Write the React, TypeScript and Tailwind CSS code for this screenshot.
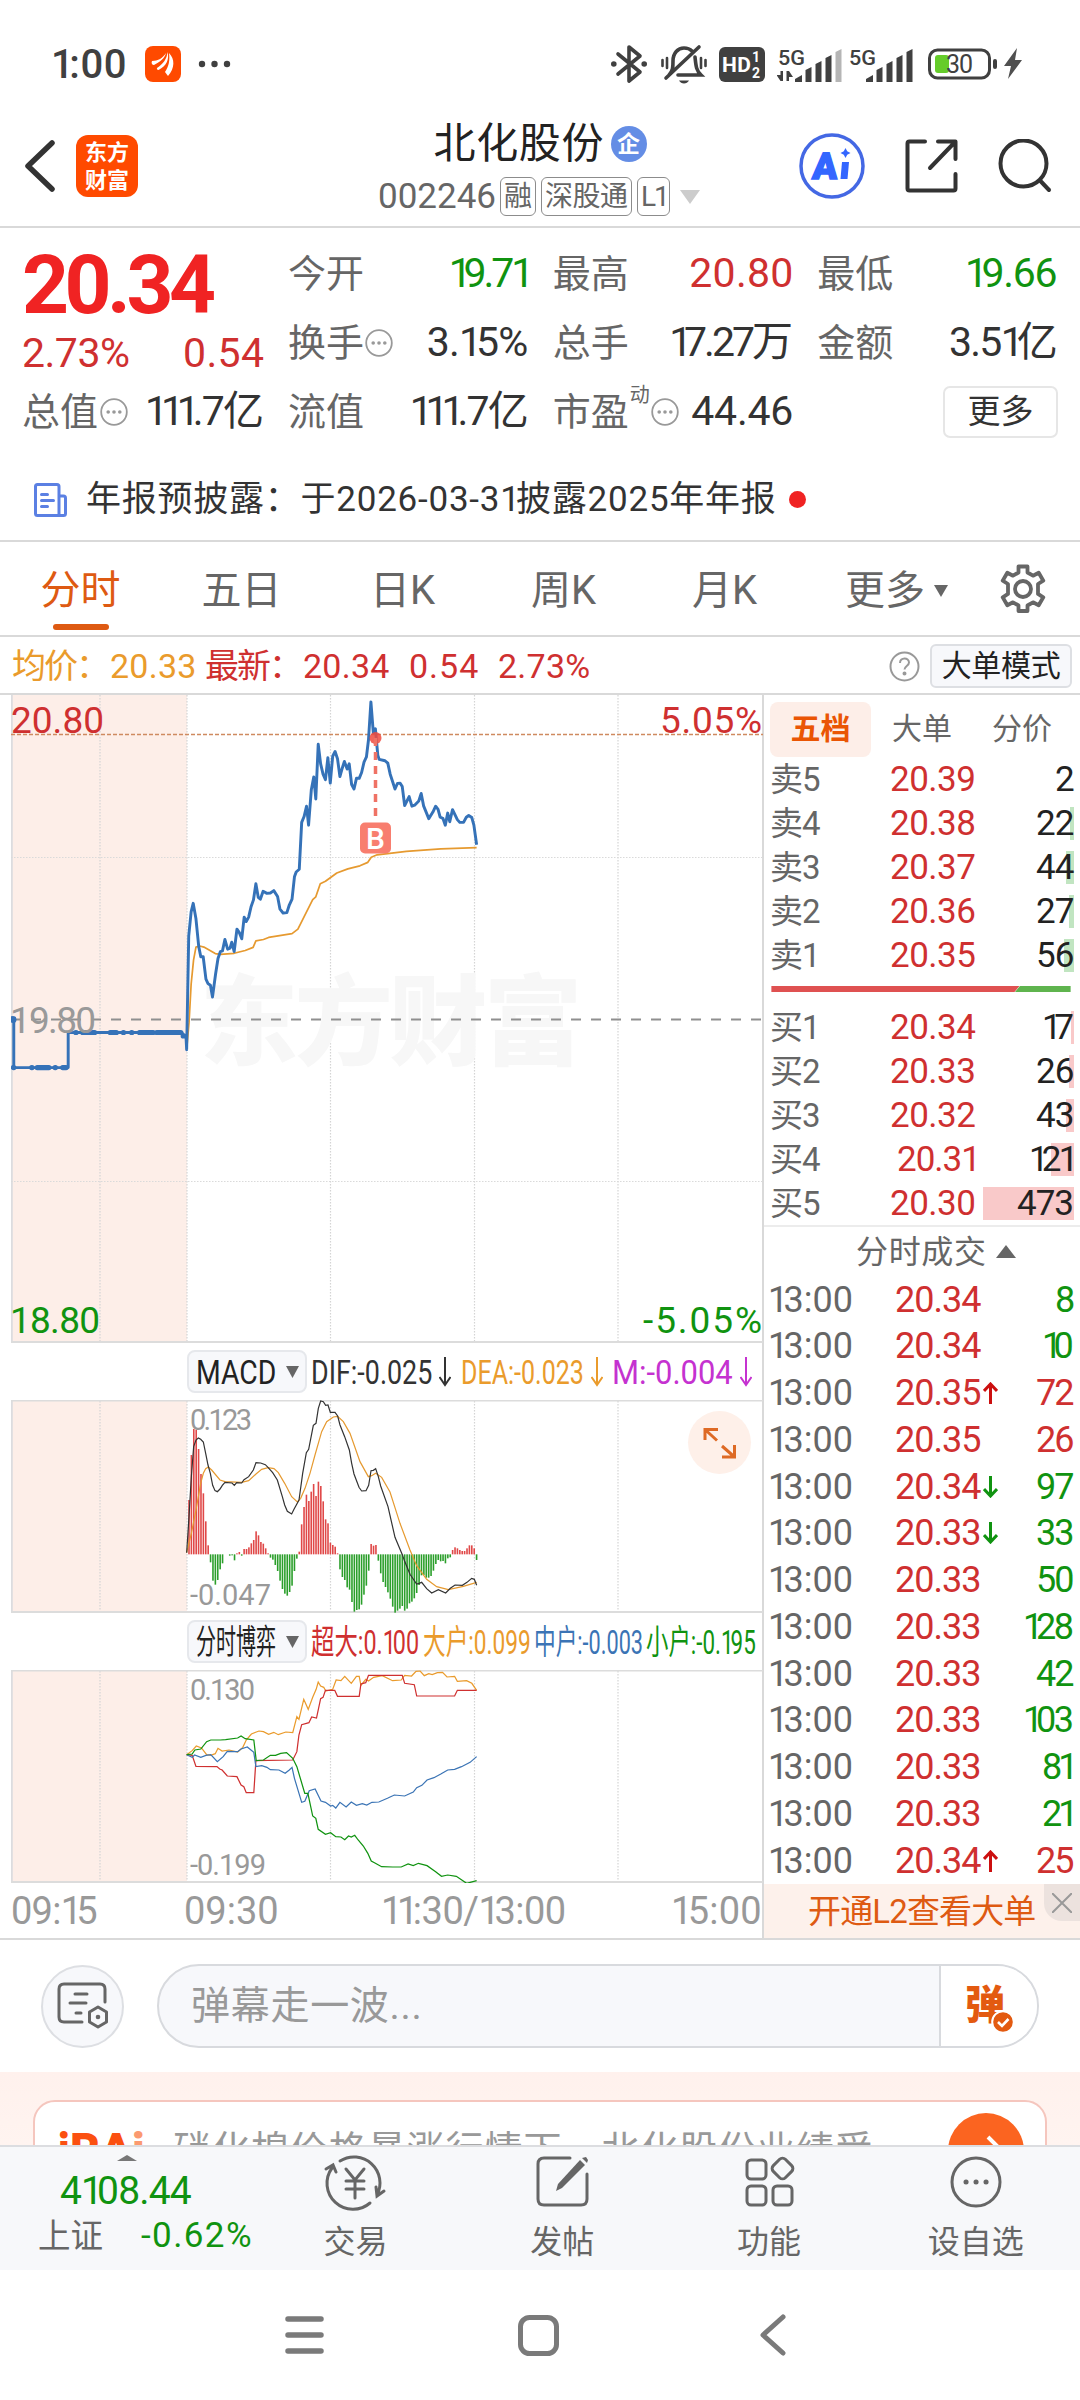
import { useLayoutEffect, useRef, type ReactNode } from 'react'

const quotes = [
  { label: '今开', value: '19.71', w: 80, color: 'text-[#109310]' },
  { label: '最高', value: '20.80', w: 104, color: 'text-[#cf3030]' },
  { label: '最低', value: '19.66', w: 93, color: 'text-[#109310]' },
  { label: '换手', value: '3.15%', w: 102, color: 'text-[#333]', info: true },
  { label: '总手', value: '17.27万', w: 124, color: 'text-[#333]' },
  { label: '金额', value: '3.51亿', w: 109, color: 'text-[#333]' },
  { label: '流值', value: '111.7亿', w: 119, color: 'text-[#333]' },
  { label: '市盈', value: '44.46', w: 102, color: 'text-[#333]', info: true, sup: '动' },
]

const tabs = ['分时', '五日', '日K', '周K', '月K', '更多']

const asks = [
  { label: '卖5', price: '20.39', vol: '2', bar: 0 },
  { label: '卖4', price: '20.38', vol: '22', bar: 4 },
  { label: '卖3', price: '20.37', vol: '44', bar: 8 },
  { label: '卖2', price: '20.36', vol: '27', bar: 5 },
  { label: '卖1', price: '20.35', vol: '56', bar: 10 },
]

const bids = [
  { label: '买1', price: '20.34', vol: '17', bar: 3 },
  { label: '买2', price: '20.33', vol: '26', bar: 5 },
  { label: '买3', price: '20.32', vol: '43', bar: 8 },
  { label: '买4', price: '20.31', vol: '121', bar: 23 },
  { label: '买5', price: '20.30', vol: '473', bar: 91 },
]

const ticks = [
  { price: '20.34', vol: '8', up: false },
  { price: '20.34', vol: '10', up: false },
  { price: '20.35', vol: '72', up: true, arrow: 'up' },
  { price: '20.35', vol: '26', up: true },
  { price: '20.34', vol: '97', up: false, arrow: 'down' },
  { price: '20.33', vol: '33', up: false, arrow: 'down' },
  { price: '20.33', vol: '50', up: false },
  { price: '20.33', vol: '128', up: false },
  { price: '20.33', vol: '42', up: false },
  { price: '20.33', vol: '103', up: false },
  { price: '20.33', vol: '81', up: false },
  { price: '20.33', vol: '21', up: false },
  { price: '20.34', vol: '25', up: true, arrow: 'up' },
]

const macdBars = [
  163, 298, 376, 373, 316, 241, 183, 99, 27, -24, -79, -91, -77, -45, -27, 0, 0, -4, -3, -18, 3, 7, -4, 16, 16, 21,
  33, 43, 69, 57, 37, 32, 18, 3, -10, -16, -32, -50, -79, -104, -118, -124, -113, -94, -50, -13, 8, 90, 142, 179, 160,
  188, 211, 175, 218, 205, 159, 105, 93, 35, 28, 23, 3, -45, -68, -77, -99, -106, -143, -172, -167, -165, -151, -121,
  -94, -49, 31, 26, 28, -19, -57, -83, -98, -114, -133, -157, -175, -169, -163, -155, -169, -163, -147, -142, -132,
  -116, -92, -63, -62, -70, -70, -65, -49, -29, -17, -21, -20, -27, -12, -9, 13, 21, 18, 13, 10, 10, 18, 27, 27, 18,
  -17,
]

const priceLine =
  '40,1392 40,1532 198,1532 198,1430 528,1430 533,1440 540,1440 542,1480 548,1150 555,1080 561,1055 569,1100 577,1180 583,1210 590,1210 598,1275 604,1288 611,1293 617,1327 626,1260 633,1215 640,1195 646,1193 653,1160 661,1188 668,1185 673,1168 680,1195 688,1130 695,1140 702,1158 709,1095 715,1108 722,1095 729,1065 736,1045 743,998 750,1038 756,1043 764,1020 775,1026 785,1025 795,1018 806,1035 813,1072 822,1083 833,1082 840,1060 848,1043 855,978 860,964 869,956 876,820 883,803 890,773 896,828 904,725 911,688 917,752 924,593 931,650 938,680 945,696 952,632 959,706 966,628 973,614 980,635 987,687 993,665 1000,643 1008,665 1014,650 1021,710 1028,723 1035,692 1043,692 1050,675 1057,645 1064,630 1070,580 1077,470 1084,560 1090,548 1097,625 1101,637 1118,641 1126,648 1133,680 1147,723 1154,707 1162,706 1168,716 1175,771 1188,745 1196,773 1204,770 1216,758 1223,736 1230,772 1245,809 1257,790 1265,773 1272,782 1278,805 1286,808 1293,828 1300,793 1306,818 1314,783 1328,812 1335,820 1346,820 1354,805 1361,800 1370,806 1376,828 1384,885'
const avgLine =
  '542,1480 549,1400 555,1290 562,1220 569,1182 580,1179 592,1182 625,1201 640,1203 680,1200 712,1192 735,1183 743,1164 765,1160 780,1154 848,1143 865,1130 885,1090 908,1044 917,1036 930,998 945,991 978,967 1010,955 1045,946 1068,936 1078,921 1095,914 1180,904 1280,897 1384,893'
const difLine =
  '50,668 57,560 64,440 71,350 78,330 85,324 92,328 100,336 107,370 114,405 121,430 128,466 135,482 142,485 150,477 157,466 165,457 186,459 193,466 200,458 215,459 222,449 236,440 250,420 258,398 272,399 286,404 294,412 308,428 322,450 337,500 344,525 352,544 365,552 372,538 387,510 398,430 409,368 416,358 430,286 438,280 445,235 452,213 460,215 467,226 474,225 481,247 495,247 503,258 510,285 524,320 538,360 545,400 552,432 567,472 575,483 588,482 596,466 603,422 610,421 617,416 625,440 632,468 654,530 675,622 697,674 704,694 720,733 740,762 747,760 755,757 770,776 785,789 805,779 827,789 841,775 855,765 877,766 891,757 905,745 913,748 920,766'
const deaLine =
  '50,668 64,610 78,540 92,460 100,430 107,416 115,411 125,420 150,450 165,455 215,457 236,452 258,432 275,418 294,413 312,416 325,428 344,460 365,500 382,516 392,505 405,475 420,430 435,375 455,305 470,275 490,261 503,259 520,275 540,310 570,395 595,440 605,437 617,430 635,442 660,486 690,580 720,660 740,707 770,748 800,770 835,779 880,769 920,757'

const flows = [
  {
    color: '#ea9b2c',
    points:
      '542,464 558,452 570,438 585,444 600,464 612,466 625,461 633,445 645,453 665,450 690,456 705,442 715,420 730,402 752,393 765,395 780,403 795,397 808,404 830,396 850,398 862,350 868,358 882,298 895,328 908,292 918,268 924,246 931,258 940,262 946,273 966,268 976,240 990,242 1001,229 1020,250 1035,229 1043,229 1048,256 1062,238 1070,243 1085,232 1110,227 1140,242 1165,240 1175,226 1195,228 1208,214 1220,213 1232,227 1245,221 1255,224 1270,218 1285,217 1298,231 1320,229 1328,244 1355,242 1370,250 1384,271',
  },
  {
    color: '#cf3030',
    points:
      '542,464 558,466 569,499 630,500 638,507 645,510 660,528 688,530 700,555 708,560 715,578 737,578 743,482 850,480 862,455 868,405 876,374 897,368 905,351 919,354 931,296 938,292 945,271 972,271 980,289 1043,289 1048,252 1062,248 1070,226 1168,226 1175,250 1203,254 1210,288 1320,288 1328,271 1384,271',
  },
  {
    color: '#3b74b5',
    points:
      '542,464 558,472 565,465 583,472 598,466 612,464 631,485 648,470 660,454 690,455 700,447 718,441 737,457 743,500 760,497 775,502 785,509 810,510 828,520 840,510 848,502 855,535 876,607 885,604 898,572 915,567 932,603 945,607 960,618 966,616 975,624 987,607 1005,621 1020,606 1035,616 1052,611 1065,615 1080,607 1100,606 1125,595 1145,585 1175,588 1200,576 1210,563 1225,556 1240,540 1260,533 1280,522 1300,510 1320,508 1340,500 1365,487 1384,470',
  },
  {
    color: '#109310',
    points:
      '542,464 558,462 566,450 583,447 600,425 612,420 640,420 655,419 690,414 700,408 712,416 737,420 744,482 765,480 785,466 800,466 815,460 832,458 850,475 862,500 885,580 894,580 908,648 917,655 924,688 945,703 960,698 975,710 990,711 1001,719 1012,708 1020,711 1030,706 1040,720 1055,738 1068,760 1078,783 1090,790 1108,800 1140,801 1165,801 1185,792 1200,797 1215,790 1240,797 1265,815 1282,829 1300,825 1325,829 1355,850 1384,842',
  },
]

// Sets one line of text to an exact width, by tracking or (squeeze) by scaling the glyphs.
// Roboto's "1" is tabular, so it gets tighter tracking than the other digits.
function Fit({ w, squeeze, className = '', children }: { w: number; squeeze?: boolean; className?: string; children: string }) {
  const ref = useRef<HTMLSpanElement>(null)

  useLayoutEffect(() => {
    const el = ref.current
    if (!el) return
    el.style.setProperty('--ls', '0px')
    el.style.transform = 'none'
    const natural = el.offsetWidth
    if (squeeze) {
      el.style.transform = `scaleX(${w / natural})`
    } else if (children.length > 1) {
      el.style.setProperty('--ls', `${(w - natural) / (children.length - 1)}px`)
    }
  }, [w, squeeze, children])

  return (
    <span className={`block shrink-0 ${className}`} style={{ width: w }}>
      <span ref={ref} className="inline-block origin-left tracking-[var(--ls)] whitespace-nowrap">
        {children.split(/(1)/).map((part, i) =>
          part === '1' ? (
            <span key={i} className="tracking-[calc(var(--ls)-0.13em)]">
              1
            </span>
          ) : (
            part
          ),
        )}
      </span>
    </span>
  )
}

function InfoDots() {
  return (
    <svg width="28" height="30" viewBox="0 0 28 30" fill="none" className="shrink-0">
      <circle cx="14" cy="15" r="12.8" stroke="#999" strokeWidth="1.8" />
      <circle cx="8.2" cy="15" r="1.8" fill="#999" />
      <circle cx="14" cy="15" r="1.8" fill="#999" />
      <circle cx="19.8" cy="15" r="1.8" fill="#999" />
    </svg>
  )
}

function Signal({ weak, arrows }: { weak?: boolean; arrows?: boolean }) {
  return (
    <svg width="67" height="40" viewBox="0 0 67 40" fill="#404040">
      <text x="1" y="21" fontSize="21" fontWeight="500" textLength="27" lengthAdjust="spacingAndGlyphs" className="font-['Roboto']">5G</text>
      {arrows && <path d="M6 27v10h-2.500l-4-6h4v-4zM9.500 37V27h2.500l4 6h-4v4z" />}
      <path d="M18 38v-3l7-4v7zM28.500 38V26l6-3v15zM38.500 38V20l6-3v21zM48.500 38V14l6-3v27z" />
      <path d="M58.500 38V8l6-3v33z" fill={weak ? '#b5b5b5' : '#404040'} />
    </svg>
  )
}

function StatusBar() {
  return (
    <div className="flex h-[128px] items-center pr-[58px] pl-[51px] text-[#404040]">
      <Fit w={76} className="pt-[2px] text-[40px] leading-none font-medium">1:00</Fit>
      <svg width="36" height="36" viewBox="0 0 36 36" className="ml-[18px]">
        <rect width="36" height="36" rx="8" fill="#ff4a00" />
        <path d="M7 15c6 0 11-3 14-8-1 5-6 9-12 12-2 0-3-2-2-4zM12 22c6-4 10-9 10.500-16 2 7-1 14-9 18-1 0-2-1-1.500-2zM20 26c4-6 5-12 4-19 6 6 6 15-1 23-1-1-2-3-3-4z" fill="#fff" />
      </svg>
      <svg width="34" height="8" viewBox="0 0 34 8" fill="#404040" className="ml-[17px]">
        <circle cx="4" cy="4" r="3.200" />
        <circle cx="16.500" cy="4" r="3.200" />
        <circle cx="29" cy="4" r="3.200" />
      </svg>

      <div className="ml-auto flex items-center">
        <svg width="36" height="40" viewBox="0 0 36 40" fill="none" stroke="#404040" strokeWidth="3.600" strokeLinejoin="round" strokeLinecap="round">
          <path d="M7 10 29 28 18 37V3L29 12 7 30" />
          <circle cx="2.800" cy="20" r="2.800" fill="#404040" stroke="none" />
          <circle cx="33.200" cy="20" r="2.800" fill="#404040" stroke="none" />
        </svg>
        <svg width="46" height="42" viewBox="0 0 46 42" fill="none" stroke="#404040" strokeWidth="3.600" strokeLinecap="round" className="ml-[14px]">
          <path d="M8 32c4-4 4-8 4-14 0-8 5-13 11-13 4 0 6 1 8 3M34 14c1 9 1 13 6 18H17M5 35 38 4" />
          <path d="M18 37.500h10c-1 2-3 3-5 3s-4-1-5-3z" fill="#404040" stroke="none" />
          <path d="M1.500 17v6M6 15v10M40 15v10M44.500 17v6" strokeWidth="2.600" />
        </svg>
        <svg width="46" height="35" viewBox="0 0 46 35" fill="#fff" className="ml-[12px] font-['Roboto']">
          <rect width="46" height="35" rx="6" fill="#404040" />
          <text x="3" y="25" fontSize="21" fontWeight="700" textLength="29">HD</text>
          <text x="33" y="15" fontSize="14" fontWeight="700">1</text>
          <text x="33" y="31" fontSize="14" fontWeight="700">2</text>
        </svg>
        <div className="ml-[12px] flex gap-[4px]">
          <Signal weak arrows />
          <Signal />
        </div>
        <svg width="69" height="32" viewBox="0 0 69 32" fill="none" className="ml-[13px]">
          <rect x="1.500" y="2" width="60" height="28" rx="8" stroke="#404040" strokeWidth="3" />
          <rect x="7" y="7" width="14" height="18" rx="3" fill="#65cc2a" />
          <rect x="65" y="11" width="4" height="10" rx="2" fill="#404040" />
          <text x="18" y="25" fontSize="25" textLength="27" fill="#404040" className="font-['Roboto']">30</text>
        </svg>
        <svg width="18" height="32" viewBox="0 0 18 32" fill="#505050" className="ml-[7px]">
          <path d="M13 0 0 18h7L4 31 18 12h-7z" />
        </svg>
      </div>
    </div>
  )
}

function Tag({ w, children }: { w: number; children: string }) {
  return (
    <span className="flex h-[39px] items-center justify-center rounded-[6px] border-[1.5px] border-[#8c8c8c] px-[3px] text-[28px] leading-none">
      <Fit w={w}>{children}</Fit>
    </span>
  )
}

function Header() {
  return (
    <div className="grid h-[100px] grid-cols-[380px_1fr_380px] border-b-2 border-[#d9d9d9]">
      <div className="flex items-center gap-[21px] pb-[22px] pl-[24px]">
        <svg width="31" height="52" viewBox="0 0 31 52" fill="none" stroke="#333" strokeWidth="5.500" strokeLinecap="round" strokeLinejoin="round">
          <path d="M28 3 4 26l24 23" />
        </svg>
        <div className="flex h-[62px] w-[62px] flex-col items-center justify-center gap-[3px] rounded-[12px] bg-[#ff4a00] text-[22px] leading-[25px] font-bold text-white">
          <span>东方</span>
          <span>财富</span>
        </div>
      </div>
      <div className="flex flex-col items-center">
        <div className="flex h-[32px] items-center gap-[7px]">
          <Fit w={170} className="text-[42px] leading-none text-[#222]">北化股份</Fit>
          <span className="flex h-[36px] w-[36px] items-center justify-center rounded-full bg-[#648de5] text-[23px] leading-none font-bold text-white">
            企
          </span>
        </div>
        <div className="mt-[17px] -ml-[2px] flex h-[39px] items-center gap-[5px] text-[#666]">
          <Fit w={118} className="mr-[-1px] text-[35px] leading-none">002246</Fit>
          <Tag w={28}>融</Tag>
          <Tag w={83}>深股通</Tag>
          <Tag w={25}>L1</Tag>
          <svg width="20" height="14" viewBox="0 0 20 14" className="ml-[5px]">
            <path d="M0 0h20L10 14z" fill="#ccc" />
          </svg>
        </div>
      </div>
      <div className="flex items-center justify-end gap-[40px] pr-[28px] pb-[22px]">
        <svg width="66" height="66" viewBox="0 0 66 66" fill="#3366ff" stroke="#3366ff">
          <circle cx="33" cy="33" r="31" fill="none" stroke="#4468e4" strokeWidth="3.500" />
          <text x="13" y="46" fontSize="37" fontWeight="900" strokeWidth="1.500" textLength="25" lengthAdjust="spacingAndGlyphs" className="font-['Roboto']" transform="skewX(-4) translate(3 0)">A</text>
          <path d="M43 29h7l-1.500 17h-7z" stroke="none" />
          <path d="M46.500 15l1.700 3.300 3.300 1.700-3.300 1.700L46.500 25l-1.700-3.300-3.300-1.700 3.300-1.700z" stroke="none" />
        </svg>
        <svg width="53" height="54" viewBox="0 0 53 54" fill="none" stroke="#333" strokeWidth="4" strokeLinecap="round" strokeLinejoin="round">
          <path d="M20 2.500H4.500q-2 0-2 2v45q0 2 2 2h44q2 0 2-2V35M33 2.500h17.500V20M50 3 25 29" />
        </svg>
        <svg width="54" height="54" viewBox="0 0 54 54" fill="none" stroke="#333" strokeWidth="4" strokeLinecap="round">
          <circle cx="25.500" cy="24.500" r="23" />
          <path d="M42 41.500l9 9.500" />
        </svg>
      </div>
    </div>
  )
}

function QuotePanel() {
  return (
    <div className="flex h-[218px] gap-[24px] pt-[11px] pr-[22px] pl-[22px] text-[41px] leading-none">
      <div className="w-[242px] shrink-0">
        <div className="flex h-[80px] items-end">
          <Fit w={194} className="text-[82px] leading-[68px] font-bold text-[#f02323]">20.34</Fit>
        </div>
        <div className="flex h-[58px] items-center justify-between pt-[11px] text-[#cf3030]">
          <Fit w={108}>2.73%</Fit>
          <Fit w={81}>0.54</Fit>
        </div>
        <div className="flex h-[69px] items-center justify-between text-[#333]">
          <div className="flex items-center gap-[2px] text-[#666]">
            <Fit w={76} className="text-[38px]">总值</Fit>
            <InfoDots />
          </div>
          <Fit w={119}>111.7亿</Fit>
        </div>
      </div>
      <div className="grid flex-1 grid-cols-3 grid-rows-[69px_69px_69px] gap-x-[24px]">
        {quotes.map((q) => (
          <div key={q.label} className="flex items-center justify-between">
            <div className="flex items-center gap-[1px] text-[#666]">
              <Fit w={76} className="text-[38px]">{q.label}</Fit>
              {q.sup && <span className="mb-[34px] text-[20px]">{q.sup}</span>}
              {q.info && <InfoDots />}
            </div>
            <Fit w={q.w} className={q.color}>{q.value}</Fit>
          </div>
        ))}
        <button className="my-auto ml-auto flex h-[52px] w-[115px] items-center justify-center rounded-[7px] border-2 border-[#e6e6e6] text-[33px] text-[#333]">
          更多
        </button>
      </div>
    </div>
  )
}

function Notice() {
  return (
    <div className="flex h-[96px] items-center border-b-2 border-[#d9d9d9] pt-[13px] pl-[34px] text-[35px] leading-none text-[#333]">
      <svg width="33" height="34" viewBox="0 0 33 34" fill="none" stroke="#5b80e3" strokeWidth="3" strokeLinejoin="round" strokeLinecap="round">
        <path d="M25 32.500H3.500q-2 0-2-2v-27q0-2 2-2H23q2 0 2 2zM25 13h4.500q2 0 2 2v15.500q0 2-2 2H25M7.500 11.500h6M7.500 17.500h12M7.500 23.500h6" />
      </svg>
      <Fit w={690} className="ml-[19px]">年报预披露：于2026-03-31披露2025年年报</Fit>
      <span className="ml-[13px] h-[17px] w-[17px] rounded-full bg-[#f02323]" />
    </div>
  )
}

function Tabs() {
  return (
    <div className="flex h-[95px] items-center border-b-2 border-[#d9d9d9] text-[40px] leading-none text-[#666]">
      {tabs.map((tab, i) => (
        <div key={tab} className={`flex h-full w-[161px] flex-col items-center ${i === 0 ? 'text-[#de5a12]' : ''}`}>
          <div className="flex h-[82px] items-center gap-[9px] pt-[15px]">
            <span className={i === 5 ? 'pl-[22px]' : ''}>{tab}</span>
            {i === 5 && (
              <svg width="14" height="12" viewBox="0 0 14 12">
                <path d="M0 0h14L7 12z" fill="#666" />
              </svg>
            )}
          </div>
          {i === 0 && <span className="h-[6px] w-[56px] rounded-full bg-[#de5a12]" />}
        </div>
      ))}
      <svg width="48" height="50" viewBox="0 0 48 50" fill="none" stroke="#666" strokeWidth="3.800" strokeLinejoin="round" className="ml-[33px]">
        <path d="M19.500 2.500h9v6l5.500 3.200 5.700-3 4.600 8-5.300 3.300v9.900l5.300 3.400-4.600 8-5.700-3-5.500 3.200v5.500h-9v-5.500L14 38.300l-5.700 3-4.600-8L9 29.900V20l-5.300-3.300 4.600-8 5.700 3 5.500-3.200z" />
        <circle cx="24" cy="25" r="8" />
      </svg>
    </div>
  )
}

function InfoRow() {
  return (
    <div className="flex h-[58px] items-center border-b-2 border-[#d9d9d9] pt-[2px] pr-[8px] pl-[12px] text-[34px] leading-none text-[#cf3030]">
      <Fit w={98} className="text-[#ea9b2c]">均价：</Fit>
      <Fit w={86} className="text-[#ea9b2c]">20.33</Fit>
      <Fit w={98} className="ml-[9px]">最新：</Fit>
      <Fit w={86}>20.34</Fit>
      <Fit w={69} className="ml-[20px]">0.54</Fit>
      <Fit w={92} className="ml-[20px]">2.73%</Fit>
      <div className="ml-auto flex items-center gap-[10px]">
        <svg width="31" height="31" viewBox="0 0 31 31" fill="none" stroke="#999" strokeWidth="2">
          <circle cx="15.500" cy="15.500" r="14" />
          <path d="M11 12c0-6 9-6 9-.5 0 3.500-4.500 3.500-4.500 7" />
          <circle cx="15.500" cy="22.500" r="1" fill="#999" />
        </svg>
        <button className="flex h-[44px] w-[142px] items-center justify-center rounded-[6px] border-2 border-[#dddfe3] bg-[#f7f8fb] text-[#222]">
          <Fit w={119} className="text-[30px]">大单模式</Fit>
        </button>
      </div>
    </div>
  )
}

function Grid({ h }: { h: number }) {
  return (
    <g>
      <rect x="0" y="0" width="176" height={h} fill="#fdeee8" />
      <path d={`M89 1V${h}M176 1V${h}M319.500 1V${h}M463.500 1V${h}M607 1V${h}`} stroke="#d4d4d4" strokeWidth="1.200" strokeDasharray="1.500 1.500" />
      <path d={`M.8 0V${h}`} stroke="#dcdcdf" strokeWidth="2" />
      <path d={`M0 ${h - 1}H752`} stroke="#dcdcdc" strokeWidth="2" />
    </g>
  )
}

function PriceChart() {
  return (
    <svg width="752" height="648" viewBox="0 1 752 648" fill="none" className="block font-['Roboto','Noto_Sans_CJK_SC',sans-serif]">
      <Grid h={649} />
      <text x="189" y="363" fontSize="98" fontWeight="900" textLength="382" fill="#f7f7f7">东方财富</text>
      <path d="M0 163.500H752M0 487.500H752" stroke="#dadada" strokeWidth="1.200" strokeDasharray="1.500 1.500" />
      <path d="M0 40.500H752" stroke="#cf8a5f" strokeWidth="1.300" strokeDasharray="4 2" />
      <path d="M0 325.400H751" stroke="#8f8f8f" strokeWidth="2" strokeDasharray="10 10" />
      <g fontSize="37">
        <text x="0" y="38.500" fill="#cf3030" textLength="93">20.80</text>
        <text x="649" y="38.500" fill="#cf3030" textLength="102">5.05%</text>
        <text x="-1" y="638.500" fill="#109310" textLength="90">18.80</text>
        <text x="632" y="638.500" fill="#109310" textLength="119">-5.05%</text>
      </g>
      <g transform="translate(-11 -154) scale(.34439)">
        <polyline points={avgLine} stroke="#e69a30" strokeWidth="5" strokeLinejoin="round" />
        <polyline points={priceLine} stroke="#3572b8" strokeWidth="8.500" strokeLinejoin="round" />
        <g stroke="#3572b8" strokeWidth="15" strokeLinecap="round">
          <path d="M39 1532h1M92 1532h1M108 1532h34M160 1532h1M182 1532h10M220 1430h1M240 1430h35M320 1430h18M358 1430h1M382 1430h1M405 1430h40M455 1430h70M532 1440h2" />
        </g>
      </g>
      <text x="-1" y="338.500" fontSize="37" fill="#999" textLength="86">19.80</text>
      <circle cx="2" cy="325.400" r="3.500" fill="#3572b8" />
      <circle cx="364.500" cy="44" r="6" fill="#f04a3e" fillOpacity=".85" />
      <path d="M364.500 44V124" stroke="#ef7265" strokeWidth="3.500" strokeDasharray="8 6" />
      <rect x="349" y="128.500" width="31" height="31" rx="5" fill="#f87e6f" />
      <text x="364.500" y="154.500" fontSize="30" fontWeight="500" fill="#fff" textAnchor="middle">B</text>
    </svg>
  )
}

function MacdChart() {
  return (
    <svg width="752" height="213" viewBox="0 0 752 213" fill="none" className="block font-['Roboto']">
      <Grid h={213} />
      <path d="M0 .8H752" stroke="#dcdcdc" strokeWidth="1.500" />
      <g transform="translate(159 -70) scale(.33333)">
        {macdBars.map((v, i) => (
          <rect key={i} x={54.6 + i * 7.19} y={v > 0 ? 673 - v : 673} width="4.800" height={Math.abs(v)} fill={v > 0 ? '#e04848' : '#2b9f2b'} />
        ))}
        <polyline points={deaLine} stroke="#e69a30" strokeWidth="3.600" />
        <polyline points={difLine} stroke="#333" strokeWidth="3.600" />
      </g>
      <g fontSize="29" fill="#999">
        <text x="179" y="30" textLength="62">0.123</text>
        <text x="179" y="205" textLength="81">-0.047</text>
      </g>
      <circle cx="708.500" cy="42.500" r="31.500" fill="#fef0e9" />
      <path d="M694 40V29.500h13M694 29.500l12 11M711 57h12.500V45M723.500 57l-12.500-11" stroke="#de6a25" strokeWidth="3" />
    </svg>
  )
}

function FlowChart() {
  return (
    <svg width="752" height="213" viewBox="0 0 752 213" fill="none" className="block font-['Roboto']">
      <Grid h={213} />
      <path d="M0 .8H752" stroke="#dcdcdc" strokeWidth="1.500" />
      <g transform="translate(-11 -70) scale(.34439 .33333)" strokeWidth="3.600">
        {flows.map((f) => (
          <polyline key={f.color} points={f.points} stroke={f.color} />
        ))}
      </g>
      <g fontSize="29" fill="#999">
        <text x="179" y="30" textLength="65">0.130</text>
        <text x="179" y="205" textLength="76">-0.199</text>
      </g>
    </svg>
  )
}

function IndicatorButton({ children }: { children: string }) {
  return (
    <button className="mr-[4px] flex h-[43px] w-[120px] items-center gap-[10px] rounded-[8px] border-2 border-[#e6e8ec] bg-[#f7f8fb] pl-[7px] text-[#222]">
      <Fit w={80} squeeze>{children}</Fit>
      <svg width="13" height="12" viewBox="0 0 13 12">
        <path d="M0 0h13L6.500 12z" fill="#666" />
      </svg>
    </button>
  )
}

function Legend({ w, arrow, className, children }: { w: number; arrow?: boolean; className: string; children: string }) {
  return (
    <div className={`flex items-center ${className}`}>
      <Fit w={w} squeeze>{children}</Fit>
      {arrow && (
        <svg width="12" height="30" viewBox="0 0 12 30" fill="none" stroke="currentColor" strokeWidth="2" className="ml-[7px] shrink-0">
          <path d="M6 0v28M.5 20 6 28l5.500-8" />
        </svg>
      )}
    </div>
  )
}

function Charts() {
  return (
    <div className="w-[764px] shrink-0 border-r-2 border-[#d9d9d9] pl-[11px]">
      <PriceChart />
      <div className="flex h-[57px] items-center pl-[176px] text-[34px] leading-none">
        <IndicatorButton>MACD</IndicatorButton>
        <Legend w={121} arrow className="text-[#333]">DIF:-0.025</Legend>
        <Legend w={123} arrow className="ml-[10px] text-[#ea9b2c]">DEA:-0.023</Legend>
        <Legend w={121} arrow className="ml-[9px] text-[#c532d0]">M:-0.004</Legend>
      </div>
      <MacdChart />
      <div className="flex h-[57px] items-center pl-[176px] text-[34px] leading-none">
        <IndicatorButton>分时博弈</IndicatorButton>
        <Legend w={108} className="text-[#cf3030]">超大:0.100</Legend>
        <Legend w={108} className="ml-[4px] text-[#ea9b2c]">大户:0.099</Legend>
        <Legend w={109} className="ml-[3px] text-[#3b74b5]">中户:-0.003</Legend>
        <Legend w={110} className="ml-[3px] text-[#109310]">小户:-0.195</Legend>
      </div>
      <FlowChart />
      <div className="flex h-[55px] items-center text-[38px] leading-none text-[#999]">
        <Fit w={87}>09:15</Fit>
        <Fit w={95} className="ml-[86px]">09:30</Fit>
        <Fit w={185} className="ml-[102px]">11:30/13:00</Fit>
        <Fit w={91} className="ml-auto">15:00</Fit>
      </div>
    </div>
  )
}

function volWidth(vol: string) {
  const ones = vol.split('1').length - 1
  return vol.length * 19 - ones * 6
}

function BookRow({ label, price, vol, bar, color }: { label: string; price: string; vol: string; bar: number; color: string }) {
  return (
    <div className="flex h-[44px] items-center text-[35px] leading-none">
      <Fit w={label.endsWith('1') ? 46 : 51} className="text-[33px] text-[#666]">{label}</Fit>
      <Fit w={price === '20.31' ? 79 : 86} className="ml-auto text-[#cf3030]">{price}</Fit>
      <div className="relative ml-[7px] flex h-[33px] w-[91px] items-center justify-end">
        <span className={`absolute top-0 right-0 h-full ${color}`} style={{ width: bar }} />
        <Fit w={volWidth(vol)} className="relative text-[#222]">{vol}</Fit>
      </div>
    </div>
  )
}

function OrderBook() {
  return (
    <div className="flex flex-1 flex-col">
      <div className="flex h-[63px] items-center pt-[6px] pl-[6px] text-[30px] leading-none text-[#666]">
        <span className="flex h-[55px] w-[101px] items-center justify-center rounded-[8px] bg-[#fdeee8] font-bold text-[#ea5504]">五档</span>
        <span className="ml-[21px]">大单</span>
        <span className="ml-[40px]">分价</span>
      </div>
      <div className="pr-[6px] pl-[6px]">
        {asks.map((r) => (
          <BookRow key={r.label} {...r} color="bg-[#c1e5c1]" />
        ))}
      </div>
      <svg width="304" height="6" viewBox="0 0 304 6" className="mt-[9px] ml-[5px]">
        <path d="M0 0h252l-5 6H0z" fill="#df5151" />
        <path d="M252.500 0H304v6h-56.500z" fill="#5fb44e" />
      </svg>
      <div className="mt-[13px] border-b-2 border-[#ececec] pr-[6px] pl-[6px]">
        {bids.map((r) => (
          <BookRow key={r.label} {...r} color="bg-[#f9c9c9]" />
        ))}
      </div>
      <div className="flex h-[50px] items-center gap-[10px] pl-[92px] leading-none text-[#666]">
        <Fit w={130} className="text-[32px]">分时成交</Fit>
        <svg width="20" height="14" viewBox="0 0 20 14">
          <path d="M10 0 20 13H0z" fill="#666" />
        </svg>
      </div>
      <div className="flex-1 pr-[6px] pl-[4px]">
        {ticks.map((t, i) => (
          <div key={i} className="flex h-[46.750px] items-center text-[36px] leading-none">
            <Fit w={85} className="text-[#666]">13:00</Fit>
            <Fit w={86} className="ml-[42px] text-[#cf3030]">{t.price}</Fit>
            {t.arrow && (
              <svg
                width="15"
                height="22"
                viewBox="0 0 15 22"
                fill="none"
                strokeWidth="3"
                className={`ml-[2px] ${t.arrow === 'up' ? 'stroke-[#cc0f0f]' : 'rotate-180 stroke-[#109310]'}`}
              >
                <path d="M7.500 22V2M1 9l6.500-7L14 9" />
              </svg>
            )}
            <Fit w={volWidth(t.vol)} className={`ml-auto ${t.up ? 'text-[#cf3030]' : 'text-[#109310]'}`}>
              {t.vol}
            </Fit>
          </div>
        ))}
      </div>
      <div className="relative flex h-[54px] shrink-0 items-center bg-[#fdf1eb] pl-[44px] text-[33px] leading-none text-[#de5a12]">
        <Fit w={228}>开通L2查看大单</Fit>
        <span className="absolute top-0 right-0 flex h-[37px] w-[36px] items-center justify-center rounded-bl-[18px] bg-[#ece2de]">
          <svg width="20" height="20" viewBox="0 0 20 20" stroke="#999" strokeWidth="2">
            <path d="M0 0l20 20M20 0 0 20" />
          </svg>
        </span>
      </div>
    </div>
  )
}

function Danmu() {
  return (
    <div className="flex h-[134px] items-center gap-[33px] border-t-2 border-[#d9d9d9] pl-[41px] leading-none">
      <span className="flex h-[83px] w-[83px] items-center justify-center rounded-full border-2 border-[#dddfe3] bg-[#f7f8fb]">
        <svg width="52" height="48" viewBox="0 0 52 48" fill="none" stroke="#666" strokeWidth="3" strokeLinecap="round">
          <path d="M48 20V7q0-5-5-5H7Q2 2 2 7v28q0 5 5 5h18M18 12h12M13 21h16M19 31h5" />
          <path d="M41 25l8.500 5v10L41 45l-8.500-5V30z" strokeLinejoin="round" />
          <circle cx="41" cy="35" r="2.300" fill="#666" stroke="none" />
        </svg>
      </span>
      <div className="flex h-[84px] w-[882px] items-center overflow-hidden rounded-full border-2 border-[#d8dade] bg-[#f7f8fb]">
        <Fit w={231} className="ml-[32px] text-[39px] text-[#999]">弹幕走一波...</Fit>
        <div className="relative ml-auto flex h-full w-[98px] items-center border-l-2 border-[#d8dade] bg-white pl-[24px]">
          <span className="text-[40px] font-black text-[#e35a10]">弹</span>
          <svg width="24" height="24" viewBox="0 0 24 24" className="absolute top-[44px] left-[50px]">
            <circle cx="12" cy="12" r="10.800" fill="#e35a10" stroke="#fff" strokeWidth="2" />
            <path d="M7 12l4 4 6.500-7" fill="none" stroke="#fff" strokeWidth="2.600" />
          </svg>
        </div>
      </div>
    </div>
  )
}

function AiCard() {
  return (
    <div className="h-[73px] overflow-hidden bg-linear-to-b from-[#fff1ed] to-[#fff4f0] px-[33px] pt-[28px]">
      <div className="flex h-[130px] items-start rounded-[22px] border-2 border-[#f5c6be] bg-white pt-[29px] pl-[23px] leading-none">
        <div className="-mt-[4px] flex w-[87px] text-[46px] font-black text-[#fb5010]">
          <Fit w={12} squeeze>i</Fit>
          <Fit w={30} squeeze>R</Fit>
          <Fit w={32} squeeze>A</Fit>
          <Fit w={13} squeeze className="text-[#fb9a70]">i</Fit>
        </div>
        <Fit w={700} className="ml-[28px] text-[38px] text-[#999]">硝化棉价格暴涨行情下，北化股份业绩受</Fit>
        <svg width="76" height="76" viewBox="0 0 76 76" className="-mt-[18px] ml-[75px]">
          <circle cx="38" cy="38" r="38" fill="#fb6420" />
          <path d="M22 38h30M40 24l14 14-14 14" fill="none" stroke="#fff" strokeWidth="4" />
        </svg>
      </div>
    </div>
  )
}

function BarItem({ label, children }: { label: string; children: ReactNode }) {
  return (
    <div className="flex w-[206.800px] flex-col items-center pt-[3px]">
      <svg width="64" height="64" viewBox="0 0 64 64" fill="none" stroke="#666" strokeWidth="3" strokeLinecap="round">
        {children}
      </svg>
      <span className="mt-[12px] text-[32px] leading-none">{label}</span>
    </div>
  )
}

function BottomBar() {
  return (
    <div className="flex h-[125px] border-t-2 border-[#dcdde0] bg-[#f7f8fa] leading-none text-[#666]">
      <div className="w-[252px] pt-[8px]">
        <svg width="20" height="6" viewBox="0 0 20 6" className="ml-[117px]">
          <path d="M10 0 20 6H0z" fill="#777" />
        </svg>
        <Fit w={132} className="mt-[11px] ml-[60px] text-[39px] text-[#109310]">4108.44</Fit>
        <div className="mt-[7px] flex items-center">
          <Fit w={65} squeeze className="ml-[38px] text-[34px]">上证</Fit>
          <Fit w={111} className="ml-[38px] text-[35px] text-[#109310]">-0.62%</Fit>
        </div>
      </div>
      <BarItem label="交易">
        <path d="M17 11a26 26 0 0 1 37 34M47 53A26 26 0 0 1 9 18M3 19l7-4 3 7M61 41l-7 5-1-9" />
        <path d="M23 19l9 11 9-11M32 30v18M23 31h18M23 39h18" />
      </BarItem>
      <BarItem label="发帖">
        <path d="M40 8H14q-6 0-6 6v35q0 6 6 6h37q6 0 6-6V24" />
        <path d="M26 41l2-7 22-24 5 5-23 23z" fill="#666" stroke="none" />
        <path d="M52 8l4-1 2 3-1 3z" fill="#666" stroke="none" />
      </BarItem>
      <BarItem label="功能">
        <rect x="10" y="10" width="19" height="19" rx="4" />
        <rect x="10" y="36" width="19" height="19" rx="4" />
        <rect x="36" y="36" width="19" height="19" rx="4" />
        <rect x="37" y="10" width="17" height="17" rx="4" transform="rotate(45 45.500 18.500)" />
      </BarItem>
      <BarItem label="设自选">
        <circle cx="32" cy="32" r="24" />
        <path d="M22 32h.1M32 32h.1M42 32h.1" strokeWidth="5" />
      </BarItem>
    </div>
  )
}

function SystemNav() {
  return (
    <div className="flex h-[130px] items-center pl-[285px]">
      <svg width="39" height="38" viewBox="0 0 39 38" stroke="#7a7a7a" strokeWidth="5.500" strokeLinecap="round">
        <path d="M3 3h33M3 19h33M3 35h33" />
      </svg>
      <svg width="41" height="41" viewBox="0 0 41 41" fill="none" stroke="#7a7a7a" strokeWidth="5" className="ml-[194px]">
        <rect x="2.500" y="2.500" width="36" height="36" rx="9" />
      </svg>
      <svg width="28" height="42" viewBox="0 0 28 42" fill="none" stroke="#7a7a7a" strokeWidth="5" strokeLinecap="round" strokeLinejoin="round" className="ml-[200px]">
        <path d="M24 3 4 21l20 18" />
      </svg>
    </div>
  )
}

export default function App() {
  return (
    <div className="h-[2400px] w-[1080px] overflow-hidden bg-white font-['Roboto','Noto_Sans_CJK_SC',sans-serif]">
      <StatusBar />
      <Header />
      <QuotePanel />
      <Notice />
      <Tabs />
      <InfoRow />
      <div className="flex h-[1243px]">
        <Charts />
        <OrderBook />
      </div>
      <Danmu />
      <AiCard />
      <BottomBar />
      <SystemNav />
    </div>
  )
}
